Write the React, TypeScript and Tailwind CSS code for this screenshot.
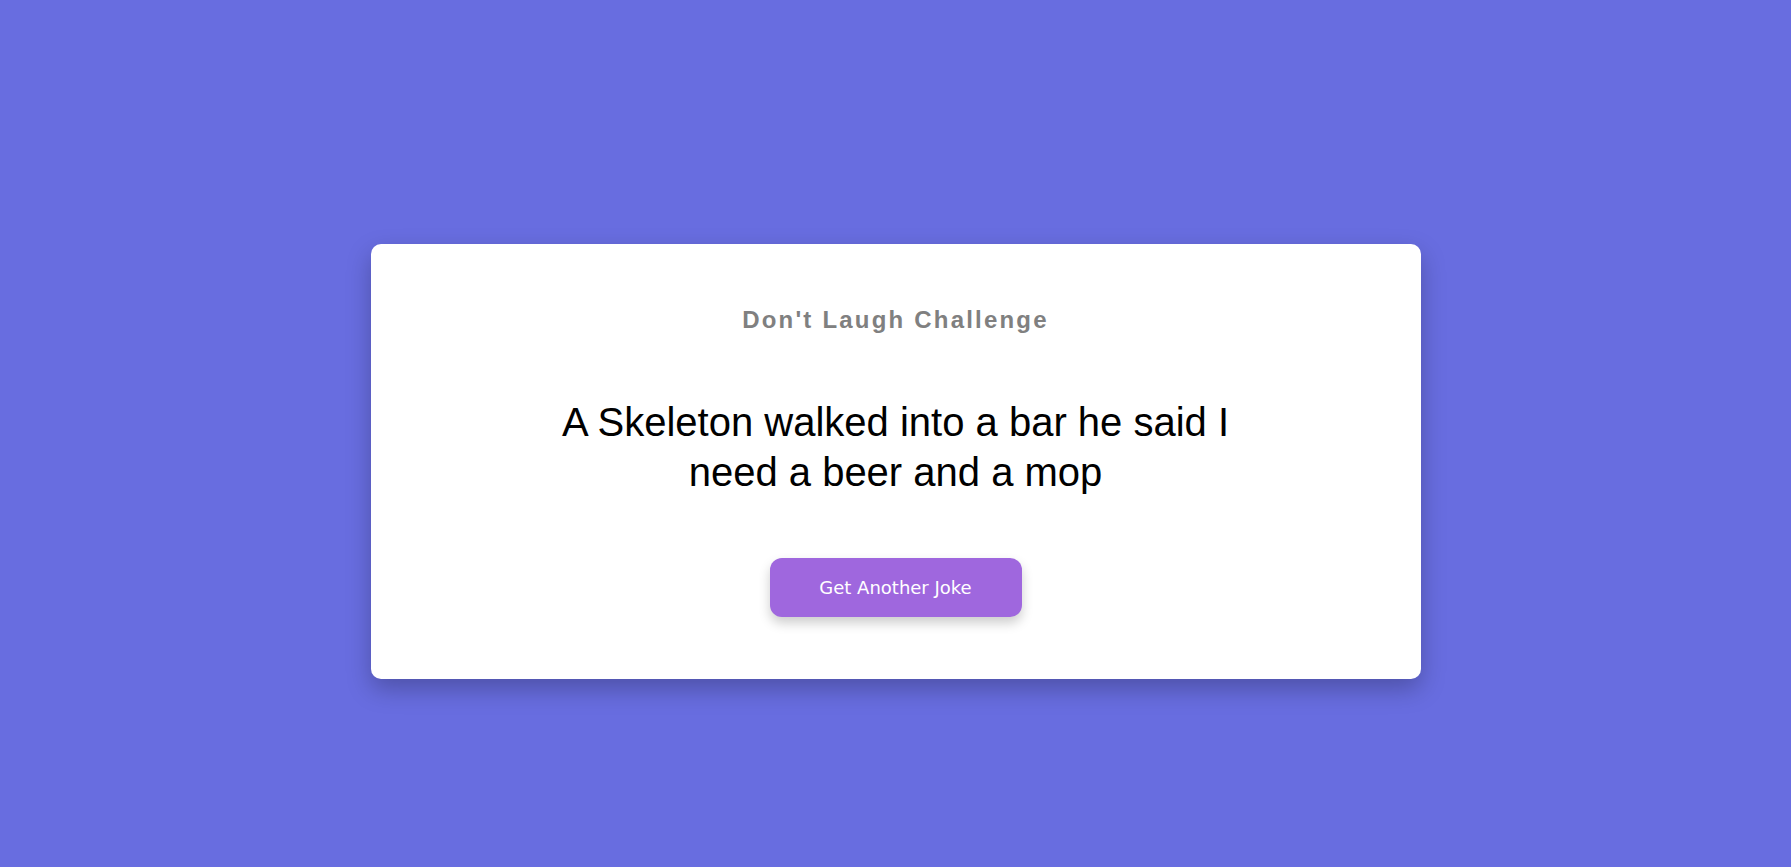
export default function App() {
  return (
    <div className="w-full h-[867px] bg-[#686de0] flex flex-col items-center pt-[244px] overflow-hidden">
      <div className="w-[1050px] h-[435px] bg-white rounded-[10px] shadow-[0_10px_25px_rgba(0,0,0,0.25)] flex flex-col items-center pt-[62px]">
        <h1 className="font-['Liberation_Sans',Arial,sans-serif] font-bold text-[24px] leading-[27.6px] tracking-[2.2px] text-[#808080] text-center">
          Don&apos;t Laugh Challenge
        </h1>
        <p className="mt-[63px] max-w-[700px] font-['Liberation_Sans',Arial,sans-serif] text-[40px] leading-[50px] text-black text-center">
          A Skeleton walked into a bar he said I need a beer and a mop
        </p>
        <button className="mt-[61px] w-[252px] h-[59px] rounded-[12px] bg-[#9f67de] text-white font-['DejaVu_Sans',Verdana,sans-serif] text-[18px] shadow-[0_6px_12px_rgba(0,0,0,0.2)] flex items-center justify-center">
          Get Another Joke
        </button>
      </div>
    </div>
  );
}
